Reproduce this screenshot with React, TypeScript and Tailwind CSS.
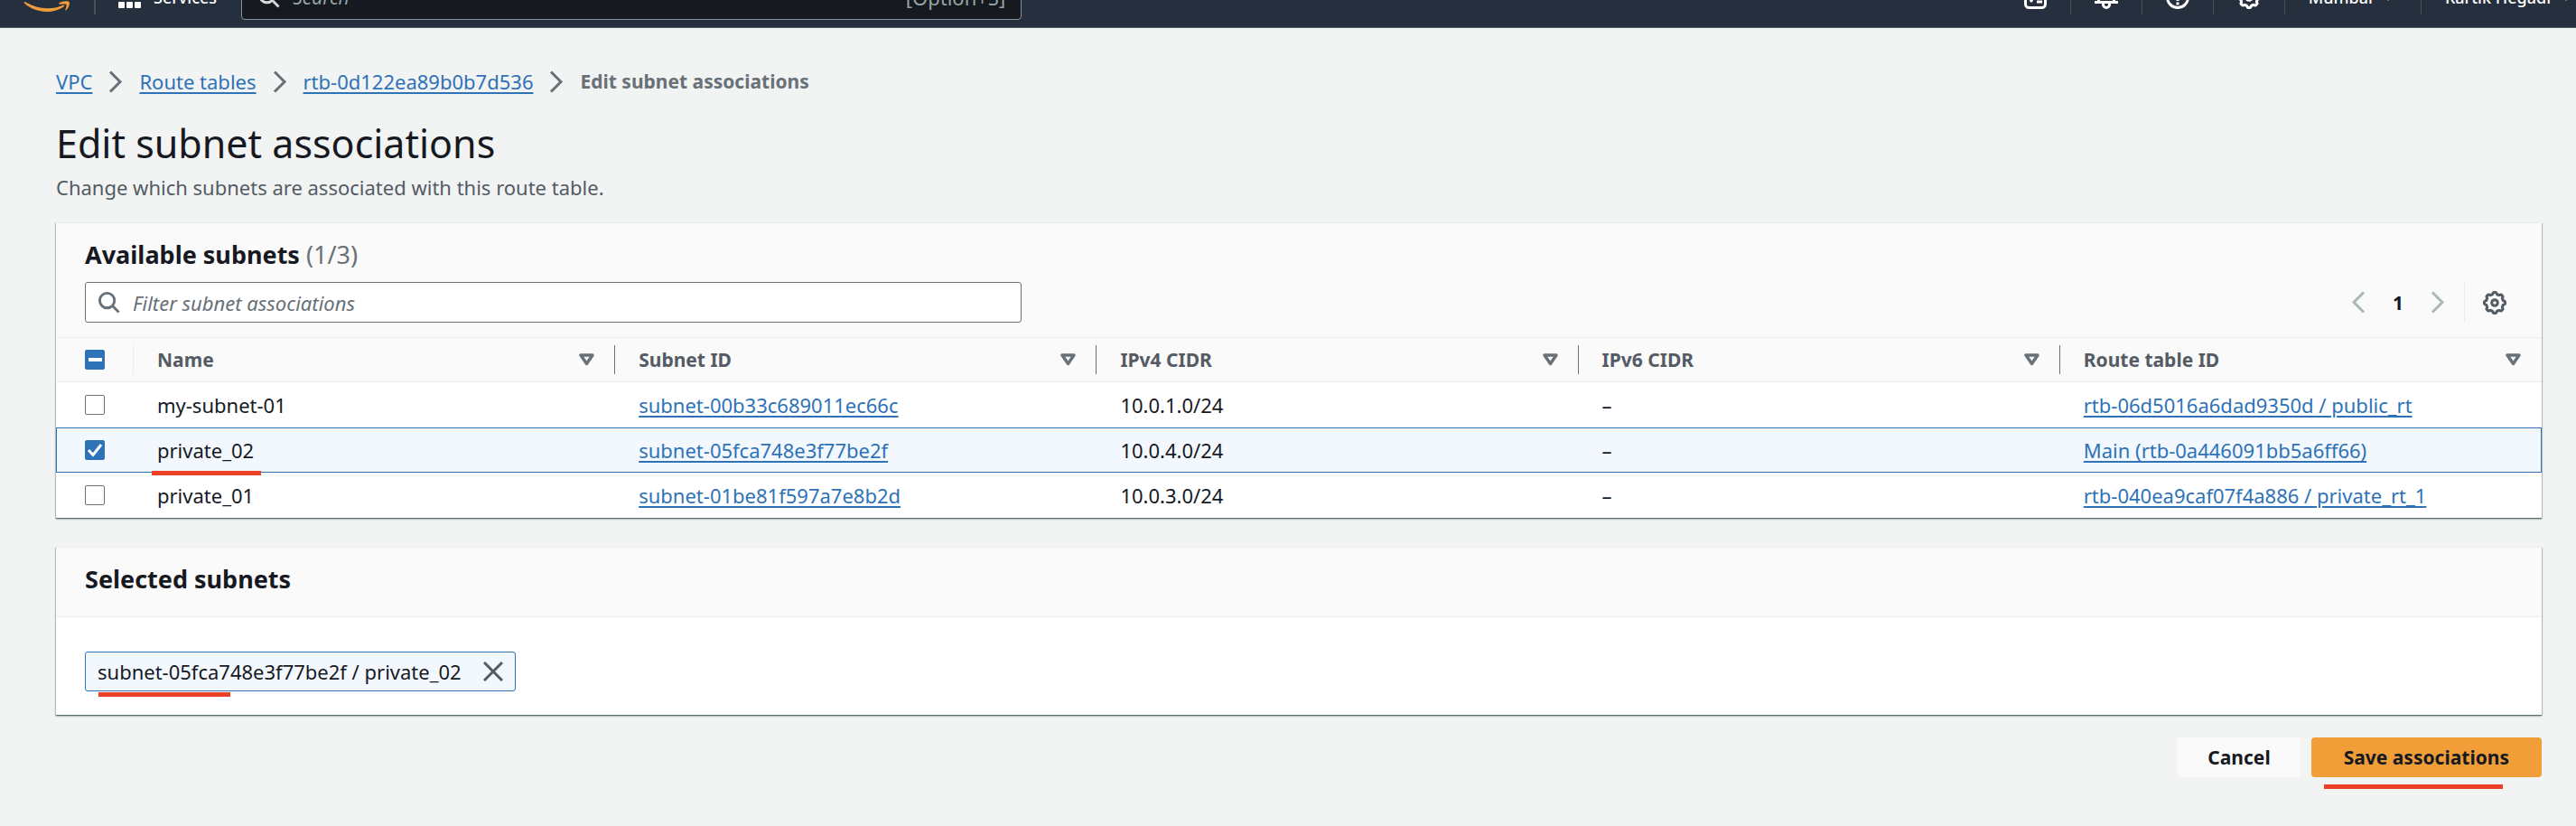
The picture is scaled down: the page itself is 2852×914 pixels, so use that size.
import { Fragment, useEffect, useRef, useState } from "react";
import type { ReactNode } from "react";

type Subnet = { name: string; id: string; ipv4: string; ipv6: string; routeTable: string };

const subnets: Subnet[] = [
  { name: "my-subnet-01", id: "subnet-00b33c689011ec66c", ipv4: "10.0.1.0/24", ipv6: "–", routeTable: "rtb-06d5016a6dad9350d / public_rt" },
  { name: "private_02", id: "subnet-05fca748e3f77be2f", ipv4: "10.0.4.0/24", ipv6: "–", routeTable: "Main (rtb-0a446091bb5a6ff66)" },
  { name: "private_01", id: "subnet-01be81f597a7e8b2d", ipv4: "10.0.3.0/24", ipv6: "–", routeTable: "rtb-040ea9caf07f4a886 / private_rt_1" },
];

const columns = ["Name", "Subnet ID", "IPv4 CIDR", "IPv6 CIDR", "Route table ID"];
const crumbs = ["VPC", "Route tables", "rtb-0d122ea89b0b7d536"];

/* Eight-lobed gear outline centred in a 26x26 box. */
const gearPath = (() => {
  const pts: string[] = [];
  for (let i = 0; i < 96; i++) {
    const a = (i / 96) * Math.PI * 2;
    const wave = Math.max(-1, Math.min(1, 1.8 * Math.cos(8 * a)));
    const r = 10.5 + 1 * wave;
    pts.push(`${(13 + r * Math.sin(a)).toFixed(2)} ${(13 - r * Math.cos(a)).toFixed(2)}`);
  }
  return `M${pts.join("L")}Z`;
})();

function Gear() {
  return (
    <svg width="26" height="26" viewBox="0 0 26 26" fill="none" stroke="currentColor" strokeWidth="3" strokeLinejoin="round" aria-hidden="true">
      <path d={gearPath} />
      <circle cx="13" cy="13" r="3.3" />
    </svg>
  );
}

function Chevron({ left = false }: { left?: boolean }) {
  return (
    <svg width="16" height="25" viewBox="0 0 16 25" fill="none" stroke="currentColor" strokeWidth="3" aria-hidden="true">
      <path d={left ? "M14 1.5 3 12.5l11 11" : "M2 1.5l11 11-11 11"} />
    </svg>
  );
}

function SearchIcon({ size = 25 }: { size?: number }) {
  return (
    <svg width={size} height={size} viewBox="0 0 26 26" fill="none" stroke="currentColor" strokeWidth="3" aria-hidden="true">
      <circle cx="11" cy="11" r="8.5" />
      <path d="M17 17l7.5 7.5" />
    </svg>
  );
}

function Divider() {
  return <span className="h-[38px] w-px shrink-0 bg-[#4a4f57]" />;
}

function Mark({ className }: { className: string }) {
  return <span aria-hidden="true" className={`absolute h-[5px] bg-[#eb4025] ${className}`} />;
}

function Checkbox({ label, checked, mixed = false, onChange }: { label: string; checked: boolean; mixed?: boolean; onChange: () => void }) {
  const ref = useRef<HTMLInputElement>(null);
  useEffect(() => {
    if (ref.current) ref.current.indeterminate = mixed;
  }, [mixed]);
  return (
    <label className="relative block size-[22px]">
      <input
        ref={ref}
        type="checkbox"
        aria-label={label}
        checked={checked}
        onChange={onChange}
        className="block size-[22px] appearance-none rounded-[2px] border border-[#687078] bg-white checked:border-[#2e72b8] checked:bg-[#2e72b8] indeterminate:border-[#2e72b8] indeterminate:bg-[#2e72b8]"
      />
      {(checked || mixed) && (
        <svg className="pointer-events-none absolute inset-0" width="22" height="22" viewBox="0 0 22 22" fill="none" stroke="#fff" strokeWidth="3" aria-hidden="true">
          <path d={mixed ? "M4 11h15" : "M4 11l5 5.500L18 5"} strokeWidth={mixed ? 4 : 3} />
        </svg>
      )}
    </label>
  );
}

function TextLink({ children }: { children: ReactNode }) {
  return (
    <a href="#" className="text-[#2e72b8] underline decoration-2 underline-offset-[3px]">
      {children}
    </a>
  );
}

function Caret() {
  return (
    <svg width="10" height="9" viewBox="0 0 10 9" fill="#fff" aria-hidden="true">
      <path d="M0 1h10L5 9z" />
    </svg>
  );
}

function TopBar() {
  return (
    <header className="-mt-[37px] flex h-[68px] items-center border-b border-[#4b545f] bg-[#252f3d] text-[18px] font-medium text-white">
      <a href="#" aria-label="Home" className="ml-[26px] mr-[26px]">
        <svg width="52" height="38" viewBox="0 0 52 38" fill="#f19e39" aria-hidden="true">
          <path d="M1 25.500c-1-.8 0-1.800 1-1.200C10 29 18 31.300 26.500 31.300c6 0 12-1.300 17.500-3.600 1-.4 1.800.7.8 1.500C39.500 33 32.500 35 26 35 16.500 35 7.500 31.500 1 25.500z" />
          <path d="M39.500 25.200c2.500-2 9.500-2.600 11-1.300 1.300 1.300-.4 7-3.300 9.400-.6.500-1.200.2-.9-.4.800-1.800 1.800-5 1.200-5.900-.7-.9-4.600-.6-6.700-.3-1.400.1-2-.9-1.300-1.500z" />
        </svg>
      </a>
      <span className="h-[38px] w-[2px] bg-[#4a4f57]" />
      <button type="button" className="ml-[25px] flex items-center gap-[14px]">
        <svg width="25" height="25" viewBox="0 0 25 25" fill="#fff" aria-hidden="true">
          {[0, 9, 18].map((y) => [0, 9, 18].map((x) => <rect key={`${x}-${y}`} x={x} y={y} width="7" height="7" rx="1" />))}
        </svg>
        Services
      </button>
      <label className="ml-[27px] flex h-[50px] w-[864px] items-center rounded-[4px] border border-[#879596] bg-[#16191f] px-[17px] text-[#95a5a6]">
        <span className="text-[#d5dbdb]">
          <SearchIcon />
        </span>
        <input
          type="search"
          aria-label="Search services"
          placeholder="Search"
          className="ml-[14px] min-w-0 flex-1 bg-transparent text-[21px] font-normal italic outline-none placeholder:text-[#95a5a6]"
        />
        <span className="text-[22px] font-normal">[Option+S]</span>
      </label>
      <nav aria-label="Account tools" className="ml-auto flex items-center">
        <button type="button" aria-label="CloudShell" className="px-[26px]">
          <svg width="25" height="26" viewBox="0 0 25 26" fill="none" stroke="#fff" strokeWidth="3" aria-hidden="true">
            <rect x="1.500" y="1.500" width="22" height="23" rx="4" />
            <path d="M6 8l5 4.500-4 5.500M14 18h6" />
          </svg>
        </button>
        <Divider />
        <button type="button" aria-label="Notifications" className="px-[26px]">
          <svg width="26" height="26" viewBox="0 0 26 26" fill="none" stroke="#fff" strokeWidth="3" aria-hidden="true">
            <path d="M4.500 18V10a8.500 8.500 0 0 1 17 0v8M0 18.500h26M9.500 19v2a3.500 3.500 0 0 0 7 0v-2" />
          </svg>
        </button>
        <Divider />
        <button type="button" aria-label="Help" className="px-[26px]">
          <svg width="26" height="26" viewBox="0 0 26 26" fill="none" stroke="#fff" strokeWidth="3" aria-hidden="true">
            <circle cx="13" cy="13" r="11.500" />
            <path d="M9 10a4 4 0 1 1 4 4v3M13 18.500v3" />
          </svg>
        </button>
        <Divider />
        <button type="button" aria-label="Settings" className="px-[26px]">
          <Gear />
        </button>
        <Divider />
        <button type="button" className="flex items-center gap-[12px] pl-[26px] pr-[31px]">
          Mumbai
          <Caret />
        </button>
        <Divider />
        <button type="button" className="flex items-center gap-[12px] pl-[26px] pr-[6px]">
          Kartik Hegadi
          <Caret />
        </button>
      </nav>
    </header>
  );
}

const card =
  "border-t border-[#eaeded] bg-white shadow-[0_1px_1px_0_rgba(0,28,36,0.35),0_2px_2px_0_rgba(0,28,36,0.2),1px_1px_1px_0_rgba(0,28,36,0.15),-1px_1px_1px_0_rgba(0,28,36,0.15)]";

export default function App() {
  const [selected, setSelected] = useState<string[]>(["private_02"]);
  const toggle = (name: string) =>
    setSelected((s) => (s.includes(name) ? s.filter((n) => n !== name) : [...s, name]));
  const all = selected.length === subnets.length;

  return (
    <div className="min-h-screen overflow-hidden bg-[#f2f3f3] text-[22px] leading-[32px] text-[#16191f] [font-family:'Noto_Sans','Open_Sans',sans-serif]">
      <TopBar />
      <main className="pb-[40px] pl-[62px] pr-[38px] pt-[43px]">
        <nav aria-label="Breadcrumb" className="flex items-center gap-[18px] text-[#687078]">
          {crumbs.map((c) => (
            <Fragment key={c}>
              <TextLink>{c}</TextLink>
              <Chevron />
            </Fragment>
          ))}
          <span className="text-[21px] font-bold">Edit subnet associations</span>
        </nav>

        <h1 className="mt-[25px] text-[43px] leading-[56px]">Edit subnet associations</h1>
        <p className="mt-[4px] text-[#545b64]">Change which subnets are associated with this route table.</p>

        <section className={`mt-[23px] ${card}`}>
          <div className="bg-[#fafafa] px-[32px] pb-[16px] pt-[17px]">
            <h2 className="text-[27px] font-bold leading-[36px]">
              Available subnets <span className="font-normal text-[#687078]">(1/3)</span>
            </h2>
            <div className="mt-[12px] flex items-center justify-between">
              <label className="flex h-[45px] max-w-[1037px] flex-1 items-center gap-[14px] rounded-[3px] border border-[#687078] bg-white px-[13px] text-[#687078]">
                <SearchIcon />
                <input
                  type="text"
                  aria-label="Filter subnet associations"
                  placeholder="Filter subnet associations"
                  className="min-w-0 flex-1 bg-transparent text-[22px] italic outline-none placeholder:text-[#687078]"
                />
              </label>
              <div className="flex items-center pr-[7px]">
                <button type="button" aria-label="Previous page" className="text-[#aab7b8]">
                  <Chevron left />
                </button>
                <button type="button" aria-current="page" className="w-[72px] text-center text-[21px] font-bold">
                  1
                </button>
                <button type="button" aria-label="Next page" className="text-[#aab7b8]">
                  <Chevron />
                </button>
                <span className="ml-[21px] mr-[20px] h-[45px] w-px bg-[#eaeded]" />
                <button type="button" aria-label="Preferences" className="text-[#545b64]">
                  <Gear />
                </button>
              </div>
            </div>
          </div>

          <table className="w-full table-fixed border-separate border-spacing-0 text-left">
            <colgroup>
              <col className="w-[86px]" />
              {columns.map((c) => (
                <col key={c} />
              ))}
            </colgroup>
            <thead className="bg-[#fafafa] text-[21px] text-[#545b64]">
              <tr>
                <th scope="col" className="h-[50px] border-y border-[#eaeded] p-0 pl-[32px]">
                  <div className="flex items-center justify-between">
                    <Checkbox
                      label="Select all subnets"
                      checked={all}
                      mixed={selected.length > 0 && !all}
                      onChange={() => setSelected(all ? [] : subnets.map((s) => s.name))}
                    />
                    <span className="h-[32px] w-px bg-[#eaeded]" />
                  </div>
                </th>
                {columns.map((c, i) => (
                  <th key={c} scope="col" className="h-[50px] border-y border-[#eaeded] p-0 pl-[26px]">
                    <div className="flex items-center">
                      <span className="flex-1 font-bold">{c}</span>
                      <button type="button" aria-label={`Sort by ${c}`} className="mr-[22px]">
                        <svg width="17" height="14" viewBox="0 0 17 14" fill="none" stroke="#687078" strokeWidth="3.4" strokeLinejoin="round" aria-hidden="true">
                          <path d="M2 2h13l-6.500 9.500z" />
                        </svg>
                      </button>
                      <span className={i < columns.length - 1 ? "h-[32px] w-px bg-[#687078]" : "h-[32px] w-px"} />
                    </div>
                  </th>
                ))}
              </tr>
            </thead>
            <tbody>
              {subnets.map((s) => {
                const on = selected.includes(s.name);
                const cell = on
                  ? "h-[50px] border-y border-[#2e72b8] bg-[#f2f8fd] p-0 pl-[26px] last:border-r"
                  : "h-[50px] p-0 pl-[26px]";
                return (
                  <tr key={s.name}>
                    <td
                      className={
                        on
                          ? "h-[50px] border-y border-l border-[#2e72b8] bg-[#f2f8fd] p-0 pl-[31px]"
                          : "h-[50px] p-0 pl-[32px]"
                      }
                    >
                      <Checkbox label={`Select ${s.name}`} checked={on} onChange={() => toggle(s.name)} />
                    </td>
                    <td className={cell}>
                      <span className="relative">
                        {s.name}
                        {s.name === "private_02" && <Mark className="-left-[6px] top-[38px] w-[121px]" />}
                      </span>
                    </td>
                    <td className={cell}>
                      <TextLink>{s.id}</TextLink>
                    </td>
                    <td className={cell}>{s.ipv4}</td>
                    <td className={cell}>{s.ipv6}</td>
                    <td className={cell}>
                      <TextLink>{s.routeTable}</TextLink>
                    </td>
                  </tr>
                );
              })}
            </tbody>
          </table>
        </section>

        <section className={`mt-[32px] ${card}`}>
          <div className="border-b border-[#eaeded] bg-[#fafafa] px-[32px] pb-[23px] pt-[17px]">
            <h2 className="text-[27px] font-bold leading-[36px]">Selected subnets</h2>
          </div>
          <div className="flex px-[32px] pb-[26px] pt-[38px]">
            <div className="relative flex h-[44px] items-center gap-[24px] rounded-[3px] border border-[#2e72b8] bg-[#f2f8fd] px-[13px]">
              <span>subnet-05fca748e3f77be2f / private_02</span>
              <button type="button" aria-label="Remove private_02">
                <svg width="22" height="22" viewBox="0 0 22 22" stroke="#545b64" strokeWidth="3" aria-hidden="true">
                  <path d="M1 1l20 20M21 1L1 21" />
                </svg>
              </button>
              <Mark className="left-[14px] top-[44px] w-[146px]" />
            </div>
          </div>
        </section>

        <div className="mt-[25px] flex justify-end gap-[12px] text-[21px] font-bold">
          <button type="button" className="h-[44px] rounded-[4px] bg-[#fafafa] px-[33px]">
            Cancel
          </button>
          <button type="button" className="relative h-[44px] rounded-[4px] bg-[#f19e39] px-[36px]">
            Save associations
            <Mark className="left-[14px] top-[52px] w-[198px]" />
          </button>
        </div>
      </main>
    </div>
  );
}
